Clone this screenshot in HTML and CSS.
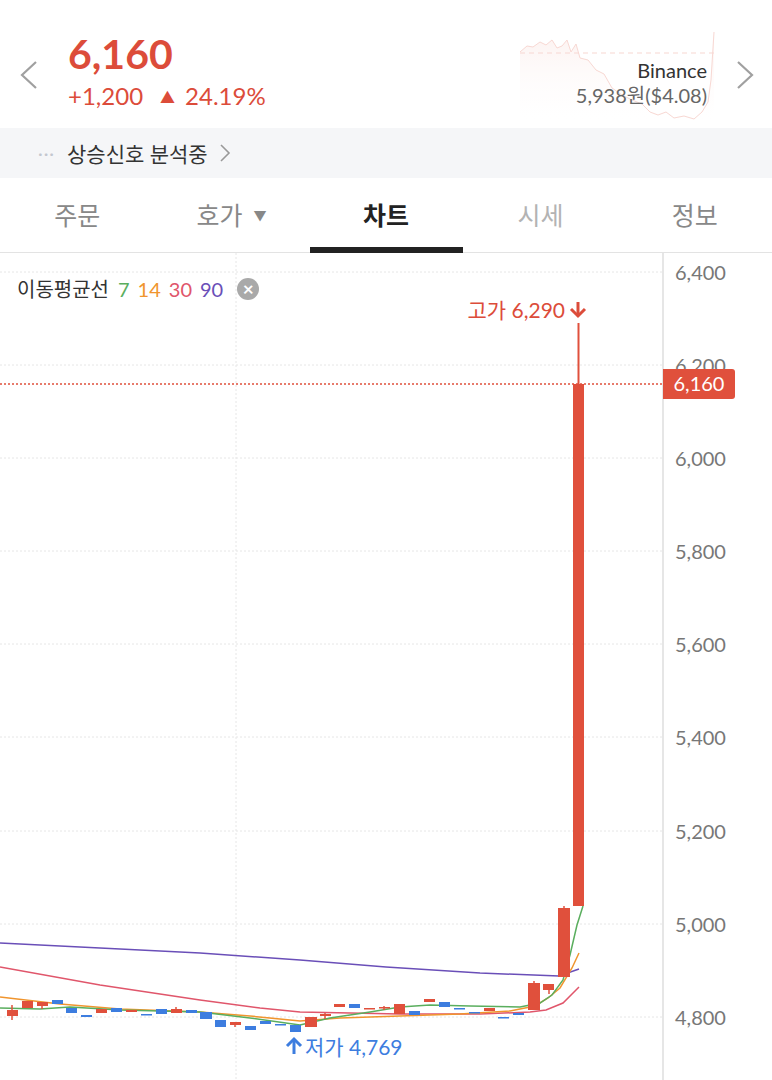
FILE: index.html
```html
<!DOCTYPE html>
<html>
<head>
<meta charset="UTF-8">
<title>차트</title>
<link rel="stylesheet" href="styles.css">
</head>
<body>
	<!-- 시세 요약 -->
	<div class="quote">
		<svg class="spark" width="200" height="92" viewBox="518 30 200 92">
			<defs>
				<linearGradient id="sparkFill" x1="0" y1="0" x2="0" y2="1">
					<stop offset="0" stop-color="#f6b7ad" stop-opacity="0.35" />
					<stop offset="1" stop-color="#ffffff" stop-opacity="0" />
				</linearGradient>
			</defs>
			<polygon fill="url(#sparkFill)" points="520,52 527,46 533,47 540,42 546,45 552,40 557,48 562,46 567,40 571,52 576,44 580,58 588,60 596,70 604,74 612,88 622,95 632,100 642,104 650,112 658,115 666,112 674,118 684,116 694,119 702,112 708,102 711,80 714,32 714,122 520,122" />
			<polyline class="spark-line" points="520,52 527,46 533,47 540,42 546,45 552,40 557,48 562,46 567,40 571,52 576,44 580,58 588,60 596,70 604,74 612,88 622,95 632,100 642,104 650,112 658,115 666,112 674,118 684,116 694,119 702,112 708,102 711,80 714,32" />
			<line class="spark-base" x1="520" y1="53" x2="714" y2="53" />
		</svg>
		<svg class="chev" width="20" height="30" viewBox="0 0 20 30"><polyline points="17,2 3,15 17,28" /></svg>
		<div class="price">
			<div class="price-now">6,160</div>
			<div class="price-change">+1,200<span class="tri">▲</span>24.19%</div>
		</div>
		<div class="exchange">
			<div class="ex-name">Binance</div>
			<div class="ex-price">5,938원($4.08)</div>
		</div>
		<svg class="chev" width="20" height="30" viewBox="0 0 20 30"><polyline points="3,2 17,15 3,28" /></svg>
	</div>

	<!-- 상승신호 -->
	<div class="signal">
		<span class="dots">···</span>
		<span class="signal-text">상승신호 분석중</span>
		<svg class="signal-chev" width="12" height="20" viewBox="0 0 12 20"><polyline points="2,2 10,10 2,18" /></svg>
	</div>

	<!-- 탭 -->
	<div class="tabs">
		<div class="tab">주문</div>
		<div class="tab">호가 <span class="caret">▼</span></div>
		<div class="tab active">차트</div>
		<div class="tab light">시세</div>
		<div class="tab">정보</div>
	</div>

	<!-- 차트 -->
	<div class="chart">
		<svg class="plot" width="772" height="827" viewBox="0 253 772 827">
			<g class="grid">
				<line x1="0" y1="272" x2="662" y2="272" />
				<line x1="0" y1="365" x2="662" y2="365" />
				<line x1="0" y1="458" x2="662" y2="458" />
				<line x1="0" y1="551" x2="662" y2="551" />
				<line x1="0" y1="644" x2="662" y2="644" />
				<line x1="0" y1="737" x2="662" y2="737" />
				<line x1="0" y1="831" x2="662" y2="831" />
				<line x1="0" y1="924" x2="662" y2="924" />
				<line x1="0" y1="1017" x2="662" y2="1017" />
				<line x1="236" y1="253" x2="236" y2="1080" />
			</g>
			<line class="axis" x1="663" y1="253" x2="663" y2="1080" />

			<g class="axis-labels">
				<text x="675" y="280">6,400</text>
				<text x="675" y="373">6,200</text>
				<text x="675" y="466">6,000</text>
				<text x="675" y="559">5,800</text>
				<text x="675" y="652">5,600</text>
				<text x="675" y="745">5,400</text>
				<text x="675" y="839">5,200</text>
				<text x="675" y="932">5,000</text>
				<text x="675" y="1025">4,800</text>
			</g>

			<!-- 이동평균선 -->
			<polyline class="ma ma90" points="0,943 100,948 200,953 300,960 386,967 480,973 559,976 579,969" />
			<polyline class="ma ma30" points="0,967 100,985 200,1000 260,1008 300,1012 400,1014 480,1014 530,1012 546,1010 563,1003 579,987" />
			<polyline class="ma ma14" points="0,997 60,1004 120,1009 200,1012 250,1016 300,1021 340,1018 400,1016 460,1014 510,1011 535,1006 548,998 560,988 572,968 579,953" />
			<polyline class="ma ma7" points="0,1008 40,1009 70,1007 120,1010 200,1012 250,1018 300,1025 330,1018 370,1012 400,1007 430,1005 470,1006 520,1007 540,1003 552,995 563,980 570,955 577,925 583,906" />

			<!-- 캔들 -->
			<g class="up">
				<line x1="12" y1="1005" x2="12" y2="1020" />
				<rect x="7" y="1010" width="11" height="6" />
				<rect x="22" y="1001" width="11" height="7" />
				<line x1="42" y1="1002" x2="42" y2="1009" />
				<rect x="37" y="1002" width="11" height="4" />
				<rect x="96" y="1009" width="11" height="4" />
				<rect x="126" y="1010" width="11" height="2" />
				<line x1="176" y1="1007" x2="176" y2="1013" />
				<rect x="171" y="1009" width="11" height="4" />
				<line x1="235" y1="1022" x2="235" y2="1027" />
				<rect x="230" y="1022" width="11" height="3" />
				<rect x="305" y="1017" width="12" height="10" />
				<line x1="325" y1="1013" x2="325" y2="1019" />
				<rect x="320" y="1014" width="11" height="2" />
				<rect x="334" y="1004" width="11" height="3" />
				<rect x="364" y="1008" width="11" height="1.5" />
				<line x1="384" y1="1006" x2="384" y2="1010" />
				<rect x="379" y="1007" width="11" height="1.5" />
				<rect x="394" y="1004" width="11" height="10" />
				<rect x="424" y="999" width="11" height="3" />
				<rect x="484" y="1008" width="11" height="3" />
				<line x1="534" y1="981" x2="534" y2="1010" />
				<rect x="528" y="983" width="12" height="27" />
				<line x1="549" y1="984" x2="549" y2="994" />
				<rect x="543" y="984" width="11" height="6" />
				<line x1="564" y1="906" x2="564" y2="977" />
				<rect x="558" y="908" width="12" height="69" />
				<line class="wick" x1="578.5" y1="323" x2="578.5" y2="384" />
				<rect x="573" y="384" width="11" height="522" />
			</g>
			<g class="down">
				<rect x="52" y="1000" width="11" height="4" />
				<rect x="66" y="1008" width="11" height="5" />
				<rect x="81" y="1015" width="11" height="2" />
				<rect x="111" y="1008" width="11" height="4" />
				<rect x="141" y="1014" width="11" height="1.5" />
				<rect x="156" y="1009" width="11" height="5" />
				<rect x="186" y="1010" width="11" height="3" />
				<rect x="200" y="1012" width="12" height="7" />
				<rect x="215" y="1020" width="11" height="7" />
				<rect x="245" y="1026" width="11" height="4" />
				<rect x="260" y="1021" width="11" height="3" />
				<rect x="275" y="1024" width="11" height="1.5" />
				<rect x="290" y="1025" width="11" height="7" />
				<rect x="349" y="1004" width="11" height="4" />
				<rect x="409" y="1011" width="11" height="4" />
				<rect x="439" y="1002" width="11" height="5" />
				<rect x="454" y="1008" width="11" height="1.5" />
				<rect x="469" y="1012" width="11" height="1.5" />
				<rect x="498" y="1017" width="11" height="1.5" />
				<rect x="513" y="1013" width="11" height="2" />
			</g>

			<!-- 현재가 -->
			<line class="now-line" x1="0" y1="384" x2="662" y2="384" />
			<path class="now-box" d="M663,369 H732 a3,3 0 0 1 3,3 V396 a3,3 0 0 1 -3,3 H663 Z" />
			<text class="now-text" x="699" y="391">6,160</text>

			<!-- 고가 / 저가 -->
			<text class="high-text" x="565" y="318">고가 6,290</text>
			<g class="high-arrow">
				<line x1="578" y1="302" x2="578" y2="315" />
				<polyline points="571,309 578,316 585,309" />
			</g>
			<g class="low-arrow">
				<line x1="294" y1="1054" x2="294" y2="1040" />
				<polyline points="287,1046 294,1039 301,1046" />
			</g>
			<text class="low-text" x="305" y="1055">저가 4,769</text>
		</svg>

		<div class="legend">
			<span>이동평균선</span>
			<span class="c7">7</span>
			<span class="c14">14</span>
			<span class="c30">30</span>
			<span class="c90">90</span>
			<span class="legend-close">×</span>
		</div>
	</div>
</body>
</html>
```

FILE: styles.css
```css
body {
	margin: 0;
	width: 772px;
	height: 1080px;
	overflow: hidden;
	background: #fff;
	font-family: Lato, "Noto Sans CJK KR", sans-serif;
	color: #333;
}

/* 시세 요약 */
.quote {
	position: relative;
	display: flex;
	align-items: flex-start;
	height: 128px;
	padding: 0 17px 0 19px;
	box-sizing: border-box;
}

.spark {
	position: absolute;
	left: 518px;
	top: 30px;
	opacity: 0.5;
}

.spark-line {
	fill: none;
	stroke: #f2b2a8;
	stroke-width: 1;
}

.spark-base {
	stroke: #f2b2a8;
	stroke-width: 1.2;
	stroke-dasharray: 5 4;
}

.chev {
	flex: none;
	margin-top: 60px;
	position: relative;
}

.chev polyline {
	fill: none;
	stroke: #a0a0a0;
	stroke-width: 2.2;
}

.price {
	margin-left: 29px;
	margin-top: 32px;
}

.price-now {
	font-size: 41px;
	font-weight: 700;
	line-height: 44px;
	color: #dc4c3a;
}

.price-change {
	margin-top: 5px;
	font-size: 24px;
	line-height: 30px;
	color: #dc4c3a;
}

.tri {
	display: inline-block;
	font-size: 15px;
	margin: 0 10px 0 17px;
	position: relative;
	top: -2px;
}

.exchange {
	position: relative;
	margin-left: auto;
	margin-right: 28px;
	margin-top: 58px;
	text-align: right;
	font-size: 20px;
	line-height: 25px;
}

.ex-name {
	color: #333;
}

.ex-price {
	color: #666;
}

/* 상승신호 */
.signal {
	display: flex;
	align-items: center;
	height: 50px;
	padding-left: 38px;
	background: #f5f6f8;
}

.dots {
	color: #c3c7cf;
	font-size: 18px;
	letter-spacing: 1px;
	margin-right: 12px;
}

.signal-text {
	font-size: 21px;
	color: #333;
}

.signal-chev {
	margin-left: 11px;
}

.signal-chev polyline {
	fill: none;
	stroke: #999;
	stroke-width: 1.6;
}

/* 탭 */
.tabs {
	display: grid;
	grid-template-columns: repeat(5, 1fr);
	height: 74px;
	border-bottom: 1px solid #e3e3e3;
}

.tab {
	position: relative;
	display: flex;
	align-items: center;
	justify-content: center;
	font-size: 25px;
	color: #888;
	padding-bottom: 2px;
}

.tab .caret {
	font-size: 13px;
	color: #888;
	margin-left: 11px;
}

.tab.light {
	color: #b3b3b3;
}

.tab.active {
	color: #222;
	font-weight: 700;
}

.tab.active::after {
	content: "";
	position: absolute;
	left: 1px;
	right: 0;
	bottom: -1px;
	height: 6px;
	background: #222;
}

/* 차트 */
.chart {
	position: relative;
	height: 827px;
}

.plot {
	display: block;
	font-family: Lato, "Noto Sans CJK KR", sans-serif;
}

.grid line {
	stroke: #e6e6e6;
	stroke-width: 1;
	stroke-dasharray: 2 2;
}

.axis {
	stroke: #e6e6e6;
	stroke-width: 2;
}

.axis-labels text {
	font-size: 20px;
	fill: #777;
}

.ma {
	fill: none;
	stroke-width: 1.5;
}

.ma7 { stroke: #5aae5e; }
.ma14 { stroke: #f0952e; }
.ma30 { stroke: #e0566b; }
.ma90 { stroke: #6a4fb8; }

.up rect { fill: #e0503c; }
.up line { stroke: #e0503c; stroke-width: 1.5; }
.up .wick { stroke-width: 2; }
.down rect { fill: #3d7ddf; }

.now-line {
	stroke: #e0503c;
	stroke-width: 1.5;
	stroke-dasharray: 2 2;
}

.now-box { fill: #e0503c; }

.now-text {
	font-size: 20px;
	fill: #fff;
	text-anchor: middle;
}

.high-text {
	font-size: 21px;
	fill: #dc4c3a;
	text-anchor: end;
}

.high-arrow line,
.high-arrow polyline {
	fill: none;
	stroke: #dc4c3a;
	stroke-width: 3;
}

.low-arrow line,
.low-arrow polyline {
	fill: none;
	stroke: #3d7ddf;
	stroke-width: 3;
}

.low-text {
	font-size: 21px;
	fill: #3d7ddf;
}

.legend {
	position: absolute;
	left: 17px;
	top: 21px;
	display: flex;
	align-items: center;
	gap: 8px;
	font-size: 20px;
	color: #333;
}

.c7 { color: #5aae5e; margin-left: 1px; }
.c14 { color: #f0952e; }
.c30 { color: #e0566b; }
.c90 { color: #6a4fb8; }

.legend-close {
	display: flex;
	align-items: center;
	justify-content: center;
	width: 22px;
	height: 22px;
	margin-left: 6px;
	border-radius: 50%;
	background: #a9a9a9;
	color: #fff;
	font-size: 19px;
	font-weight: 700;
	line-height: 1;
}
```
